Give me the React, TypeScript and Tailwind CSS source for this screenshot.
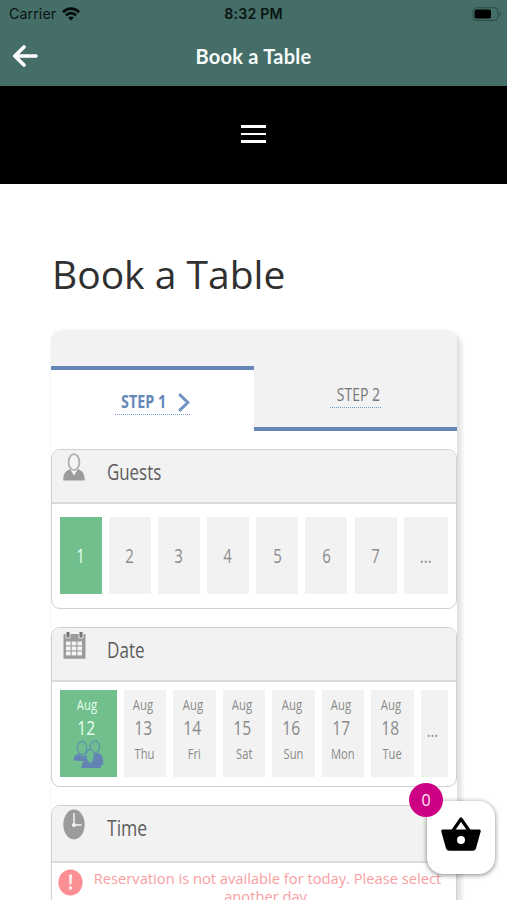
import type { ReactNode } from 'react'
import clsx from 'clsx'

const guests = ['1', '2', '3', '4', '5', '6', '7', '...']

const dates = [
  { month: 'Aug', day: '13', weekday: 'Thu' },
  { month: 'Aug', day: '14', weekday: 'Fri' },
  { month: 'Aug', day: '15', weekday: 'Sat' },
  { month: 'Aug', day: '16', weekday: 'Sun' },
  { month: 'Aug', day: '17', weekday: 'Mon' },
  { month: 'Aug', day: '18', weekday: 'Tue' },
]

// condensed label, squeezed from the regular face
function Narrow({ className, children }: { className?: string; children: ReactNode }) {
  return (
    <span className={clsx("inline-block whitespace-nowrap font-['Open_Sans','Noto_Sans',sans-serif]", className)}>
      {children}
    </span>
  )
}

function StatusBar() {
  return (
    <div className="grid h-[28px] grid-cols-3 items-center px-[9px] font-['Inter',sans-serif] text-[14px] leading-none text-[#0a1412]">
      <div className="flex items-center gap-[7px]">
        <span className="w-[46px] text-[14.2px] tracking-[0.1px]">Carrier</span>
        <svg className="h-[14px] w-[18px]" viewBox="0 0 18 14" fill="none" stroke="#050b0a" strokeWidth="2.7">
          <path d="M0.9 5.2 C5.5 0.5 12.5 0.5 17.1 5.2" />
          <path d="M3.9 8.3 C6.8 5.4 11.2 5.4 14.1 8.3" />
          <path d="M9 13.4 L6.1 10.5 C7.8 9 10.2 9 11.9 10.5 Z" fill="#050b0a" stroke="none" />
        </svg>
      </div>
      <div className="pt-px text-center text-[14.2px] font-semibold tracking-[0.2px]">8:32 PM</div>
      <div className="flex justify-end">
        <svg className="-mr-[4px] h-[14px] w-[30px]" viewBox="0 0 30 14" fill="none">
          <rect x="1" y="0.8" width="25" height="12.6" rx="3.4" stroke="#2a4a44" strokeWidth="1" />
          <rect x="2.6" y="2.6" width="16.4" height="9" rx="1.8" fill="#000" />
          <path d="M27.6 5 C29.4 5.8 29.4 8.4 27.6 9.2 Z" fill="#2a4a44" />
        </svg>
      </div>
    </div>
  )
}

function AppHeader() {
  return (
    <div className="flex h-[58px] items-start px-3">
      <svg className="mt-[17px] h-[22px] w-[27px]" viewBox="0 0 27 22" fill="none" stroke="#fff" strokeWidth="3.6" strokeLinecap="round" strokeLinejoin="round">
        <path d="M12 2 L2.8 11 L12 20" />
        <path d="M3.5 11 H24" />
      </svg>
      <h2 className="mt-[14px] flex-1 pr-[27px] text-center font-['Lato',sans-serif] text-[20px] leading-[28px] font-bold tracking-[0.25px] text-[#f7fbfa]">
        Book a Table
      </h2>
    </div>
  )
}

function PersonIcon() {
  return (
    <svg className="h-[28px] w-[22px]" viewBox="0 0 22 28">
      <path d="M0.3 27.5 C0.2 21 2 18.4 7 16 L11 22.4 L15 16 C20 18.4 21.8 21 21.7 27.5 Z" fill="#9b9b9b" />
      <path d="M7.5 15 L11 22 L14.5 15 Z" fill="#f6f6f6" />
      <ellipse cx="11" cy="9.2" rx="5.4" ry="8" fill="#f4f4f4" stroke="#b0b0b0" strokeWidth="1.8" />
    </svg>
  )
}

function CalendarIcon() {
  const cols = [3, 8.7, 14.4]
  const rows = [11, 16, 21]
  return (
    <svg className="h-[28px] w-[23px]" viewBox="0 0 23 28">
      <path d="M0.5 3 H22.5 V27.7 H0.5 Z" fill="#9b9b9b" />
      <path d="M3 0.5 H7 V7 H3 Z M16 0.5 H20 V7 H16 Z" fill="#777" stroke="#f2f2f2" strokeWidth="0.9" />
      {rows.map((y) =>
        cols.map((x) => <rect key={`${x}-${y}`} x={x} y={y - 0.5} width="4.6" height="3.9" fill="#f4f4f4" />),
      )}
    </svg>
  )
}

function ClockIcon() {
  return (
    <svg className="h-[31px] w-[22px]" viewBox="0 0 22 31">
      <ellipse cx="11" cy="15.5" rx="10.7" ry="15" fill="#9b9b9b" />
      <path d="M11 4 V16 H18.5" fill="none" stroke="#f2f2f2" strokeWidth="1.5" />
      <circle cx="11" cy="16" r="2.1" fill="#f2f2f2" />
    </svg>
  )
}

function PeopleIcon() {
  return (
    <svg className="h-[29px] w-[31px]" viewBox="0 0 31 29">
      <g fill="#6483b5">
        <path d="M0.8 20.5 C0.5 16 2.5 14.8 6 14 L9 16 L15 15 V21.5 Z" />
        <path d="M18 14 L25 13 C29 14.3 30.5 17 30 25 H18 Z" />
        <path d="M8.5 28 C8.5 22.5 10 21.5 14 20.5 L17 24 L20 20.5 C25 21.5 28 22.5 28 28 Z" />
      </g>
      <g fill="#70bb90" stroke="#5f93ae" strokeWidth="1.2">
        <ellipse cx="21.8" cy="7" rx="4.8" ry="6.2" />
        <ellipse cx="9" cy="8" rx="4.8" ry="6.6" />
        <ellipse cx="17.2" cy="16" rx="3.9" ry="6.8" />
      </g>
    </svg>
  )
}

function AlertIcon() {
  return (
    <svg className="h-[27px] w-[25px] shrink-0" viewBox="0 0 25 27">
      <ellipse cx="12.5" cy="13.5" rx="12.1" ry="13" fill="#fb8f93" />
      <path d="M10.9 5.5 H14.1 L13.5 15.5 H11.5 Z" fill="#fff0f0" />
      <circle cx="12.5" cy="19" r="1.7" fill="#fff0f0" />
    </svg>
  )
}

function Panel({ icon, title, titleClass, headerClass, children }: {
  icon: ReactNode
  title: string
  titleClass: string
  headerClass: string
  children: ReactNode
}) {
  return (
    <section className="mt-[18px] h-[160px] overflow-hidden rounded-[9px] border-[1.5px] border-[#d0d0d0] bg-white">
      <header className={clsx('flex items-start border-b-2 border-[#dadada] bg-[#f2f2f2] pl-[11px]', headerClass)}>
        <div className="mt-[3px] flex w-[44px]">{icon}</div>
        <Narrow className={clsx('mt-[6px] origin-left text-[22.5px] leading-[32px] text-[#5c5c5c]', titleClass)}>{title}</Narrow>
      </header>
      {children}
    </section>
  )
}

function Steps() {
  return (
    <div className="rounded-t-[12px] bg-[#f2f2f2] pt-[36px]">
      <div className="flex h-[65px]">
        <div className="flex w-[203px] justify-center border-t-4 border-[#6487b7] bg-white">
          <div className="mt-[20px] flex h-[25px] w-[75px] items-center justify-between border-b border-dotted border-[#7d9cc2]">
            <Narrow className="mb-[2px] ml-[6px] w-[46px] origin-left scale-x-[0.82] text-[17.5px] leading-[22px] font-bold text-[#6487b7]">STEP 1</Narrow>
            <svg className="h-[19px] w-[12px]" viewBox="0 0 12 19" fill="none" stroke="#7095c2" strokeWidth="3">
              <path d="M1.2 1.2 L9.8 9.5 L1.2 17.8" />
            </svg>
          </div>
        </div>
        <div className="flex flex-1 justify-center border-b-4 border-[#6487b7]">
          <div className="mt-[17px] flex h-[25px] w-[51px] justify-end border-b border-dotted border-[#6d9cc4]">
            <Narrow className="mr-px origin-right scale-x-[0.8] text-[17.5px] leading-[22px] text-[#777]">STEP 2</Narrow>
          </div>
        </div>
      </div>
    </div>
  )
}

function GuestPicker() {
  return (
    <div className="mt-[13px] ml-[7.5px] flex gap-[7.2px]">
      {guests.map((label, i) => (
        <button
          key={label}
          className={clsx(
            'flex h-[77px] items-center justify-center',
            i === 0 ? 'bg-[#70bf8c] text-[#e8fff0]' : 'bg-[#f2f2f2] text-[#8d8d8d]',
            i === guests.length - 1 ? 'w-[44px]' : 'w-[42px]',
          )}
        >
          <Narrow className="scale-x-[0.77] text-[19.5px] leading-[24px]">{label}</Narrow>
        </button>
      ))}
    </div>
  )
}

function DatePicker() {
  return (
    <div className="mt-[7.5px] ml-[7.5px] flex gap-[7px]">
      <button className="flex h-[87px] w-[57px] flex-col items-center bg-[#70bf8c] pt-[5px] text-[#e8fff0]">
        <Narrow className="mr-[3px] scale-x-[0.78] text-[14.5px] leading-[20px]">Aug</Narrow>
        <Narrow className="mr-[4px] scale-x-[0.8] text-[19.5px] leading-[25px]">12</Narrow>
        <PeopleIcon />
      </button>
      {dates.map((d) => (
        <button key={d.day} className="flex h-[87px] w-[42.5px] flex-col items-center bg-[#f2f2f2] pt-[5px] text-[#8a8a8a]">
          <Narrow className="mr-[3px] scale-x-[0.78] text-[14.5px] leading-[20px]">{d.month}</Narrow>
          <Narrow className="mr-[4px] scale-x-[0.8] text-[19.5px] leading-[25px]">{d.day}</Narrow>
          <Narrow className="mt-[4px] scale-x-[0.8] text-[14px] leading-[20px]">{d.weekday}</Narrow>
        </button>
      ))}
      <button className="flex h-[87px] w-[27px] items-center justify-center bg-[#f2f2f2] pr-[4px] pb-[5px] text-[#8a8a8a]">
        <Narrow className="scale-x-[0.75] text-[19px]">...</Narrow>
      </button>
    </div>
  )
}

function CartButton() {
  return (
    <div className="absolute top-[801px] left-[427px] flex h-[73px] w-[68px] justify-center rounded-[16px] bg-white pt-[15px] shadow-[0_1px_5px_rgba(0,0,0,0.5)]">
      <svg className="h-[36px] w-[40px]" viewBox="0 0 40 36">
        <path d="M12 14.5 L20 3 L28 14.5" fill="none" stroke="#000" strokeWidth="3.2" strokeLinejoin="round" />
        <path d="M1.5 13.5 H38.5 Q40 13.5 39.7 15.5 L35 32.2 Q34.2 34.8 31.8 34.8 H8.2 Q5.8 34.8 5 32.2 L0.3 15.5 Q0 13.5 1.5 13.5 Z" />
        <circle cx="20" cy="24" r="4" fill="#fff" />
      </svg>
      <span className="absolute -top-[18px] -left-[18px] flex size-[34px] items-center justify-center rounded-full bg-[#cb0083] font-['Open_Sans',sans-serif] text-[16px] text-[#ffe9f8]">
        0
      </span>
    </div>
  )
}

export default function App() {
  return (
    <div className="relative h-[900px] w-[507px] overflow-hidden bg-white">
      <div className="h-[86px] bg-[#446e67]">
        <StatusBar />
        <AppHeader />
      </div>
      <nav className="flex h-[98px] flex-col items-center gap-[5px] bg-black pt-[39px]">
        <span className="h-[2.5px] w-[25px] bg-white" />
        <span className="h-[2.5px] w-[25px] bg-white" />
        <span className="h-[2.5px] w-[25px] bg-white" />
      </nav>

      <main className="px-[51px] pt-[62px]">
        <h1 className="h-[84px] pl-px text-[39px] leading-[55px] whitespace-nowrap text-[#303030] font-['Open_Sans',sans-serif]">
          Book a Table
        </h1>
        <div className="h-[620px] w-[406px] rounded-t-[12px] bg-white shadow-[4px_4px_4px_1px_rgba(0,0,0,0.11),0_0_2px_rgba(0,0,0,0.1)]">
          <Steps />
          <Panel icon={<PersonIcon />} title="Guests" titleClass="scale-x-[0.75]" headerClass="h-[54px]">
            <GuestPicker />
          </Panel>
          <Panel icon={<CalendarIcon />} title="Date" titleClass="scale-x-[0.76]" headerClass="h-[54px]">
            <DatePicker />
          </Panel>
          <Panel icon={<ClockIcon />} title="Time" titleClass="scale-x-[0.78]" headerClass="h-[57px]">
            <div className="flex pt-[6px] pl-[6px]">
              <AlertIcon />
              <p className="w-[366px] pl-[3px] text-center text-[14.7px] leading-[18px] text-[#f99ea1] font-['Open_Sans',sans-serif]">
                Reservation is not available for today. Please select another day.
              </p>
            </div>
          </Panel>
        </div>
      </main>
      <CartButton />
    </div>
  )
}
